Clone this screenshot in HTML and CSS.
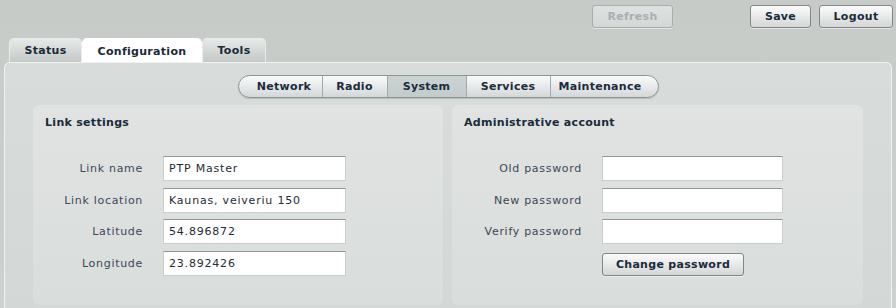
FILE: index.html
```html
<!DOCTYPE html>
<html lang="en">
<head>
    <meta charset="UTF-8" />
    <title>System</title>
    <link rel="stylesheet" href="styles.css">
</head>
<body>

    <div class="topbar">
        <button class="btn refresh" disabled>Refresh</button>
        <button class="btn save">Save</button>
        <button class="btn logout">Logout</button>
    </div>

    <div class="tabs">
        <div class="tab tab-status">Status</div>
        <div class="tab tab-config active">Configuration</div>
        <div class="tab tab-tools">Tools</div>
    </div>

    <div class="panel">
        <div class="subnav">
            <span class="seg seg-network">Network</span>
            <span class="seg seg-radio">Radio</span>
            <span class="seg seg-system active">System</span>
            <span class="seg seg-services">Services</span>
            <span class="seg seg-maint">Maintenance</span>
        </div>

        <div class="columns">
            <div class="box box-link">
                <div class="box-title">Link settings</div>
                <div class="form">
                    <label>Link name</label>
                    <input type="text" value="PTP Master" />
                    <label>Link location</label>
                    <input type="text" value="Kaunas, veiveriu 150" />
                    <label>Latitude</label>
                    <input type="text" value="54.896872" />
                    <label>Longitude</label>
                    <input type="text" value="23.892426" />
                </div>
            </div>

            <div class="box box-admin">
                <div class="box-title">Administrative account</div>
                <div class="form">
                    <label>Old password</label>
                    <input type="password" />
                    <label>New password</label>
                    <input type="password" />
                    <label>Verify password</label>
                    <input type="password" />
                    <span></span>
                    <div><button class="btn change">Change password</button></div>
                </div>
            </div>
        </div>
    </div>

</body>
</html>
```

FILE: styles.css
```css
body {
    margin: 0;
    font-family: "DejaVu Sans", Verdana, sans-serif;
    font-size: 11px;
    color: #1a2b3b;
    background: linear-gradient(#c6cbc8, #cdd2cf);
    height: 308px;
    overflow: hidden;
}

.topbar {
    display: flex;
    justify-content: flex-end;
    padding: 5px 3px 0 0;
    height: 23px;
}

.btn {
    font-family: "DejaVu Sans", Verdana, sans-serif;
    font-size: 11px;
    font-weight: bold;
    letter-spacing: 0.3px;
    color: #1a2b3b;
    height: 23px;
    padding: 0;
    border: 1px solid #80868a;
    border-radius: 3px;
    background: linear-gradient(#fbfbfb, #e4e6e5 60%, #d3d6d5);
    box-shadow: 0 1px 0 rgba(255,255,255,0.5);
    cursor: pointer;
}

    .btn:disabled {
        color: #a9afb3;
        border-color: #a7adae;
        background: linear-gradient(#dfe2e1, #d3d7d5);
        cursor: default;
    }

.refresh {
    width: 81px;
    margin-right: 77px;
}

.save {
    width: 61px;
    margin-right: 8px;
}

.logout {
    width: 74px;
}

.tabs {
    display: flex;
    padding: 10px 0 0 9px;
    height: 24px;
}

.tab {
    height: 24px;
    box-sizing: border-box;
    padding-top: 5px;
    text-align: center;
    font-weight: bold;
    letter-spacing: 0.3px;
    border-radius: 5px 5px 0 0;
    border: 1px solid #e9ecea;
    border-bottom: none;
    background: linear-gradient(#e6e9e8, #c3c9c7);
}

    .tab.active {
        background: #ffffff;
        border-color: #ffffff;
        padding-top: 6px;
    }

.tab-status {
    width: 73px;
}

.tab-config {
    width: 120px;
}

.tab-tools {
    width: 64px;
}

.panel {
    margin: 0 4px;
    height: 260px;
    box-sizing: border-box;
    border: 1px solid #f1f3f2;
    border-bottom: none;
    border-radius: 6px 6px 0 0;
    background: linear-gradient(#d8dcda, #d3d8d6);
    padding-top: 12px;
}

.subnav {
    display: flex;
    width: 421px;
    height: 23px;
    margin: 0 auto;
    box-sizing: border-box;
    border: 1px solid #8d9496;
    border-radius: 12px;
    overflow: hidden;
    background: linear-gradient(#fafbfb, #e5e8e8 55%, #d2d7d7);
    box-shadow: 0 1px 1px rgba(0,0,0,0.15);
}

.seg {
    display: flex;
    align-items: center;
    justify-content: center;
    font-weight: bold;
    letter-spacing: 0.3px;
    border-right: 1px solid #a3a9ab;
}

    .seg:last-child {
        border-right: none;
    }

    .seg.active {
        background: linear-gradient(#ccd3d3, #c3cbcb);
    }

.seg-network {
    width: 84px;
    padding-left: 8px;
    box-sizing: border-box;
}

.seg-radio {
    width: 64px;
}

.seg-system {
    width: 78px;
}

.seg-services {
    width: 83px;
}

.seg-maint {
    flex: 1;
    padding-right: 8px;
}

.columns {
    display: flex;
    gap: 9px;
    padding: 7px 0 0 28px;
}

.box {
    height: 200px;
    box-sizing: border-box;
    background: linear-gradient(#e0e3e1, #d9dddb);
    border-radius: 6px;
    padding: 11px 12px 0;
}

.box-link {
    width: 410px;
}

.box-admin {
    width: 411px;
}

.box-title {
    font-weight: bold;
    letter-spacing: 0.3px;
    height: 40px;
}

.form {
    display: grid;
    row-gap: 6.5px;
    align-items: center;
}

.box-link .form {
    grid-template-columns: 98px 183px;
    column-gap: 20px;
}

.box-admin .form {
    grid-template-columns: 118px 181px;
    column-gap: 20px;
}

label {
    text-align: right;
    letter-spacing: 0.7px;
    color: #3b4855;
}

input {
    height: 25px;
    box-sizing: border-box;
    margin: 0;
    padding: 0 5px;
    font-family: "DejaVu Sans", Verdana, sans-serif;
    font-size: 11px;
    letter-spacing: 0.8px;
    color: #1e2b36;
    background: #ffffff;
    border: 1px solid #c9cdcc;
    border-top-color: #8f9594;
    outline: none;
}

.change {
    width: 142px;
    margin-top: 2px;
}
```
